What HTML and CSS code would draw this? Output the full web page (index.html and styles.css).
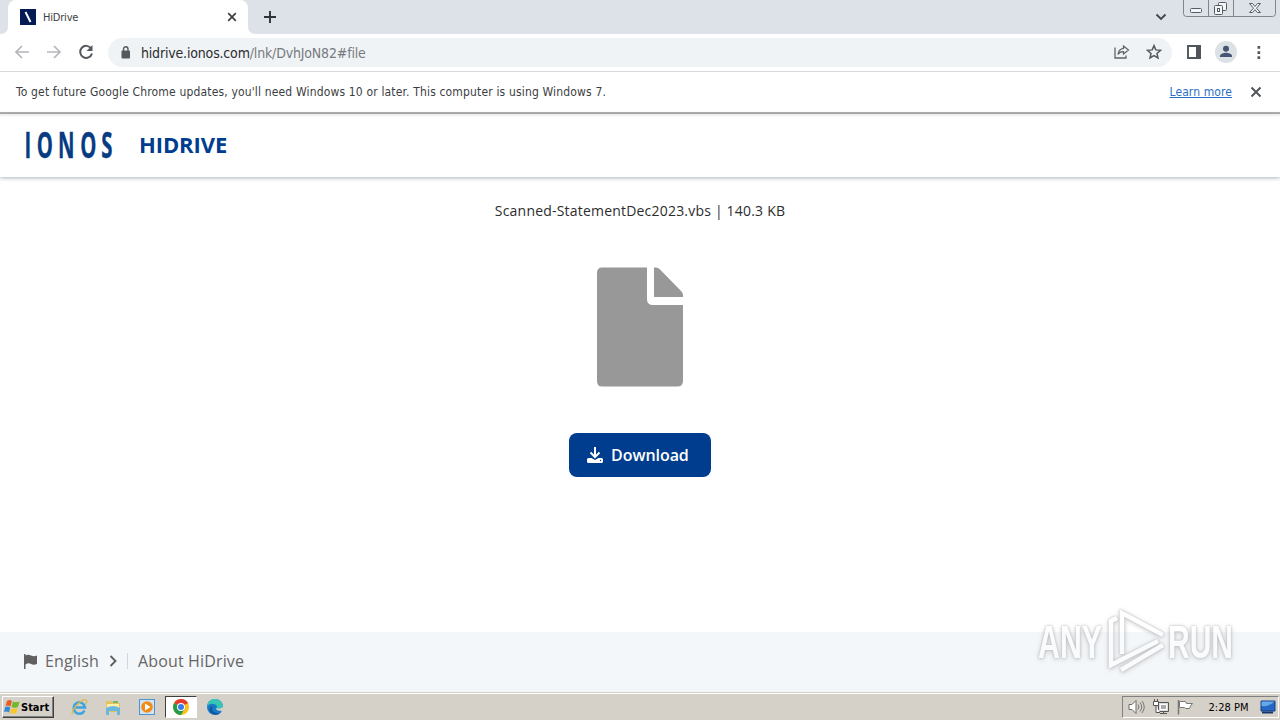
FILE: index.html
```html
<!DOCTYPE html>
<html lang="en">
<head>
    <meta charset="UTF-8">
    <meta name="viewport" content="width=device-width, initial-scale=1.0">
    <title>HiDrive</title>
    <link rel="stylesheet" href="styles.css">
</head>
<body>
    <div class="tabstrip">
        <div class="tab-edge"></div>
        <div class="tab">
            <svg class="favicon" width="16" height="16" viewBox="0 0 16 16"><rect width="16" height="16" fill="#061b55"/><path d="M5.500 3L10.500 13" stroke="#fff" stroke-width="2"/></svg>
            <span class="tab-title">HiDrive</span>
            <svg width="10" height="10" viewBox="0 0 10 10"><path d="M1.200 1.200L8.800 8.800M8.800 1.200L1.200 8.800" stroke="#3c4043" stroke-width="1.700"/></svg>
        </div>
        <div class="tab-rest">
            <svg width="12" height="12" viewBox="0 0 12 12"><path d="M6 0V12M0 6H12" stroke="#303338" stroke-width="1.900"/></svg>
            <svg class="tab-search" width="12" height="8" viewBox="0 0 12 8"><path d="M1.500 1.500L6 6L10.500 1.500" fill="none" stroke="#44474b" stroke-width="1.900"/></svg>
            <svg class="window-buttons" width="94" height="18" viewBox="0 0 94 18">
                <path d="M.5 0V13.500Q.5 16.500 3.500 16.500H89.500Q92.500 16.500 92.500 13.500V0M25.500 0V16M50.500 0V16" fill="none" stroke="#7f858d"/>
                <g fill="#f4f5f7" stroke="#565b63"><rect x="7.500" y="8.500" width="11" height="4" rx="1"/><rect x="35.500" y="2.500" width="8" height="8" rx="1"/><rect x="31.500" y="5.500" width="8" height="9" rx="1"/><rect x="34.500" y="8.500" width="2" height="3"/><path d="M66.500 3.500h3l2.500 3 2.500-3h3l-4 4.700 4 4.300h-3l-2.500-2.800-2.500 2.800h-3l4-4.300z"/></g>
            </svg>
        </div>
    </div>
    <div class="toolbar">
        <div class="nav">
            <svg width="16" height="16" viewBox="0 0 16 16"><path d="M15 8H2M8 2L2 8L8 14" fill="none" stroke="#b5b7ba" stroke-width="1.700"/></svg>
            <svg width="16" height="16" viewBox="0 0 16 16"><path d="M1 8H14M8 2L14 8L8 14" fill="none" stroke="#b5b7ba" stroke-width="1.700"/></svg>
            <svg width="16" height="16" viewBox="0 0 16 16"><path d="M13.200 4.500A6 6 0 1 0 14 9.500" fill="none" stroke="#55585d" stroke-width="2"/><path d="M14.500 1V7H8.500z" fill="#55585d"/></svg>
        </div>
        <div class="omnibox">
            <svg width="10" height="13" viewBox="0 0 10 13"><rect x=".5" y="4.500" width="8.500" height="8" rx="1" fill="#55585d"/><path d="M2.500 5V3.300A2.250 2.500 0 0 1 7 3.300V5" fill="none" stroke="#55585d" stroke-width="1.400"/></svg>
            <span class="url">hidrive.ionos.com<span class="path">/lnk/DvhJoN82#file</span></span>
            <svg class="share" width="16" height="16" viewBox="0 0 16 16"><path d="M1 3.500V14H12V11.500" fill="none" stroke="#5f6368" stroke-width="1.300"/><path d="M9.500 2L14.500 6L9.500 10V7.700Q5.800 7.500 4 10.500Q4.600 5 9.500 4.400Z" fill="none" stroke="#5f6368" stroke-width="1.200"/></svg>
            <svg width="16" height="16" viewBox="0 0 16 16"><path d="M8 1.600L9.800 5.900L14.500 6.300L11 9.400L12 14L8 11.600L4 14L5 9.400L1.500 6.300L6.200 5.900Z" fill="none" stroke="#55585d" stroke-width="1.500"/></svg>
        </div>
        <svg width="14" height="14" viewBox="0 0 14 14"><path d="M1 1H13V13H1Z" fill="none" stroke="#515459" stroke-width="1.900"/><path d="M9 1H14V13H9z" fill="#515459"/></svg>
        <svg class="avatar" width="22" height="22" viewBox="0 0 22 22"><circle cx="11" cy="11" r="11" fill="#dce1e6"/><circle cx="11" cy="7.700" r="3" fill="#465474"/><path d="M5 16V15C5 12.700 9 11.700 11 11.700S17 12.700 17 15V16Z" fill="#465474"/></svg>
        <svg width="4" height="13" viewBox="0 0 4 13"><path d="M.5 0h2.700v2.700h-2.700zM.5 5.200h2.700v2.700h-2.700zM.5 10.300h2.700v2.700h-2.700z" fill="#55585d"/></svg>
    </div>
    <div class="infobar">
        <span class="notice">To get future Google Chrome updates, you'll need Windows 10 or later. This computer is using Windows 7.</span>
        <a class="learn">Learn more</a>
        <svg width="12" height="12" viewBox="0 0 12 12"><path d="M1.500 1.500L10.500 10.500M10.500 1.500L1.500 10.500" stroke="#505357" stroke-width="1.900"/></svg>
    </div>

    <header class="header">
        <svg class="logo" width="100" height="56" viewBox="0 0 100 56">
            <text class="logo-text" transform="translate(0 39.500) scale(.58 1)" x="2.500 23.500 60.500 98.500 135" y="0">IONOS</text>
        </svg>
        <span class="product">HIDRIVE</span>
    </header>

    <main class="content">
        <div class="file-name">Scanned-StatementDec2023.vbs | 140.3 KB</div>
        <svg class="file-icon" width="86" height="120" viewBox="0 0 86 120" fill="#989898"><path d="M5 .5H50V32Q50 38 56 38H86V114Q86 119.500 80 119.500H5Q0 119.500 0 114V6Q0 .5 5 .5Z"/><path d="M57 .5H59Q61 .5 63 2.500L84 24Q86 26 86 28V30H57Z"/></svg>
        <button class="download">
            <svg width="16" height="16" viewBox="0 0 16 16"><path d="M8 0V9M3.500 5.500L8 10L12.500 5.500" fill="none" stroke="#fff" stroke-width="2"/><path d="M1.500 11H4.500L8 13L11.500 11H14.500Q16 11 16 12.500V14.500Q16 16 14.500 16H1.500Q0 16 0 14.500V12.500Q0 11 1.500 11Z" fill="#fff"/><circle cx="13.500" cy="13.500" r=".7" fill="#003d8f"/></svg>
            <span>Download</span>
        </button>
    </main>

    <footer class="footer">
        <svg width="13" height="15" viewBox="0 0 13 15"><path d="M0 0H1.500V1.500Q4 0 7 1.500T13 1.500V10Q9.500 11.500 7 10T1.500 10.500V15H0Z" fill="#606060"/></svg>
        <span class="language">English</span>
        <svg class="chevron" width="8" height="12" viewBox="0 0 8 12"><path d="M1.500 1L6.500 6L1.500 11" fill="none" stroke="#606060" stroke-width="1.900"/></svg>
        <span class="about">About HiDrive</span>
    </footer>

    <div class="taskbar">
        <div class="start">
            <svg width="17" height="16" viewBox="0 0 17 16"><path d="M3 2Q5.500 0 8 2L6.500 7.500Q4 6 1.500 7Z" fill="#e75e24"/><path d="M9 2.500Q12 4 15.500 2.500L14 8Q11 9.500 7.500 8Z" fill="#72b72c"/><path d="M1.200 8Q4 7 6.300 8.500L5 13.500Q2.500 12 0 13Z" fill="#3488d4"/><path d="M7.300 9Q10.500 10.500 13.700 9L12.500 14Q9 15.500 6 14Z" fill="#f7c72c"/></svg>
            <span>Start</span>
        </div>
        <div class="apps">
            <div class="app"><svg width="18" height="18" viewBox="0 0 18 18"><path d="M14.500 12.500A5.700 5.700 0 1 1 15 9.500H5" fill="none" stroke="#3ba5e2" stroke-width="2.500"/><path d="M3 16C-1 14 12 0 16 2C17.500 3 16.500 5 15.500 6.500" fill="none" stroke="#dfba48" stroke-width="1.300"/></svg></div>
            <div class="app"><svg width="16" height="16" viewBox="0 0 16 16"><path d="M1 2H6L8 4H15V13H1Z" fill="#e5c25c"/><path d="M2 5H14V12H2Z" fill="#fff1ad"/><path d="M1 9Q8 5 15 9V16H12V12H4V16H1Z" fill="#6bb8df"/><path d="M8 2H13V4H8Z" fill="#72b865"/></svg></div>
            <div class="app"><svg width="16" height="16" viewBox="0 0 16 16"><rect x=".5" y=".5" width="15" height="15" fill="#cfe5f6" stroke="#4f94cd"/><circle cx="8" cy="8" r="5.800" fill="#f28a16"/><path d="M6 4.500L11.500 8L6 11.500Z" fill="#fff"/></svg></div>
            <div class="app active"><svg width="16" height="16" viewBox="0 0 16 16"><circle cx="8" cy="8" r="8" fill="#fbc116"/><path d="M8 8L1.100 4A8 8 0 0 1 15 4Z" fill="#e33b2e"/><path d="M8 8L1.100 4A8 8 0 0 0 8 16L11.500 10Z" fill="#249b4d"/><circle cx="8" cy="8" r="4" fill="#fff"/><circle cx="8" cy="8" r="3" fill="#377de8"/></svg></div>
            <div class="app"><svg width="16" height="16" viewBox="0 0 16 16"><circle cx="8" cy="8" r="8" fill="#167ac6"/><path d="M.3 7C1 2 4 0 8 0C13 0 16 4 16 7C16 10 14 11 11 11C8 11 10 10 10 8C10 5 4 3 .3 7Z" fill="#39c5b5"/><path d="M6 7C3 11 7 15 13 14Q10 17 6 15C1 13 2 7 6 7Z" fill="#14549d"/><path d="M9 9Q9 12 15 12L16 11V8Q13 11 9 9Z" fill="#d5d0c8"/></svg></div>
        </div>
        <div class="tray">
            <svg width="18" height="16" viewBox="0 0 18 16"><path d="M1 5.500H4L8 1.500V14.500L4 10.500H1Z" fill="#fff" stroke="#6b6b6b"/><path d="M10 5.500Q12 8 10 10.500M12 3.500Q15.500 8 12 12.500M14 2Q18.500 8 14 14" fill="none" stroke="#777"/></svg>
            <svg width="17" height="16" viewBox="0 0 17 16"><path d="M5.500 3.500H15.500V12.500H5.500Z" fill="#ddd" stroke="#555"/><path d="M7.500 5.500H13.500V10.500H7.500Z" fill="#aaa" stroke="#fff"/><path d="M.5 2.500H5.500V6.500H.5ZM1.500 0V2M4.500 0V2M3 7V13.500H7M7 14.500H14M10.500 13V15" fill="#fff" stroke="#555"/></svg>
            <svg width="17" height="16" viewBox="0 0 17 16"><path d="M1.500 1V15.500" stroke="#777" stroke-width="1.500"/><path d="M2.500 2.500H8.500L9.500 4.500H15.500Q13 7 12.500 9.500H8.500L7.500 8.500H2.500Z" fill="#fff" stroke="#777"/></svg>
            <span class="clock">2:28 PM</span>
            <svg width="16" height="14" viewBox="0 0 16 14"><path d="M1 1H15V11H1Z" fill="#2468c3" stroke="#153d85"/><path d="M1.500 6Q8 7 14.500 1.500H1.500Z" fill="#65a9e9"/><path d="M2 12.500H13" stroke="#14366e" stroke-width="2"/></svg>
        </div>
    </div>

    <svg class="watermark" width="210" height="76" viewBox="0 0 210 76">
        <g class="mark-text"><text x="8" y="54" textLength="64" lengthAdjust="spacingAndGlyphs">ANY</text><text x="138" y="54" textLength="65" lengthAdjust="spacingAndGlyphs">RUN</text></g>
        <path d="M87 14L81 17V61L128 37M92 50V9L133 31M91 66L133 41" fill="none" stroke="#fff" stroke-width="4.500"/>
    </svg>
</body>
</html>
```
FILE: styles.css
```css
* {
    box-sizing: border-box;
}
body {
    margin: 0;
    width: 1280px;
    height: 720px;
    position: relative;
    display: flex;
    flex-direction: column;
    overflow: hidden;
    background: #fff;
    font-family: 'DejaVu Sans Condensed', 'DejaVu Sans', sans-serif;
    color: #3c3e42;
}
svg {
    display: block;
    flex-shrink: 0;
    overflow: visible;
}
.tabstrip {
    height: 34px;
    flex-shrink: 0;
    display: flex;
    background: #fff;
}
.tab-edge {
    width: 8px;
    background: #dde1e8;
    border-bottom-right-radius: 7px;
}
.tab {
    width: 240px;
    display: flex;
    align-items: center;
    padding: 0 11px 0 12px;
    border-radius: 8px 8px 0 0;
    background: #fff;
    box-shadow: 0 -8px #dde1e8;
    font-size: 11px;
}
.tab-title {
    flex: 1;
    margin-left: 7px;
    letter-spacing: -0.2px;
}
.tab-rest {
    flex: 1;
    display: flex;
    align-items: center;
    padding: 0 3px 0 16px;
    background: #dde1e8;
    border-bottom-left-radius: 7px;
}
.tab-search {
    margin-left: auto;
    margin-right: 16px;
}
.window-buttons {
    align-self: flex-start;
}
.toolbar {
    height: 38px;
    flex-shrink: 0;
    display: flex;
    align-items: center;
    padding: 0 19px 1px 14px;
    border-bottom: 1px solid #d7d9dc;
}
.nav {
    display: flex;
    gap: 16px;
    width: 94px;
}
.omnibox {
    width: 1065px;
    height: 29px;
    display: flex;
    align-items: center;
    padding: 0 10px 0 13px;
    margin-right: 15px;
    border-radius: 15px;
    background: #f0f3f5;
}
.url {
    flex: 1;
    margin-left: 10px;
    padding-top: 1px;
    font-size: 14px;
    letter-spacing: -0.17px;
    color: #2b2c2f;
}
.path {
    color: #777a7f;
}
.share {
    margin-right: 16px;
}
.avatar {
    margin: 0 20px 0 14px;
}
.infobar {
    height: 42px;
    flex-shrink: 0;
    display: flex;
    align-items: center;
    padding: 0 18px 0 16px;
    border-bottom: 2px solid #b1b1b1;
    font-size: 12px;
}
.notice {
    letter-spacing: 0.16px;
}
.learn {
    margin-left: auto;
    margin-right: 18px;
    letter-spacing: 0.1px;
    color: #2b6fc4;
    text-decoration: underline;
}
.header {
    height: 63px;
    flex-shrink: 0;
    display: flex;
    align-items: center;
    padding-left: 23px;
    box-shadow: 0 1px 4px rgba(40, 60, 90, 0.4), inset 0 3px 2px -1px #eee;
}
.logo-text {
    font-family: 'Open Sans', sans-serif;
    font-size: 35px;
    font-weight: 700;
    fill: #073b83;
    stroke: #073b83;
    stroke-width: 0.4px;
    stroke-linejoin: round;
}
.product {
    margin-left: 16px;
    padding-bottom: 4px;
    font: 700 22px 'Open Sans', sans-serif;
    letter-spacing: -0.1px;
    color: #003d8f;
}
.content {
    flex: 1;
    display: flex;
    flex-direction: column;
    align-items: center;
    padding-top: 24px;
}
.file-name {
    font: 14px/20px 'Open Sans', sans-serif;
    letter-spacing: 0.2px;
    color: #2d2d2d;
}
.file-icon {
    margin-top: 46px;
}
.download {
    width: 142px;
    height: 44px;
    display: flex;
    align-items: center;
    gap: 8px;
    margin-top: 46px;
    padding: 0 18px;
    border: none;
    border-radius: 8px;
    background: #003d8f;
    color: #fff;
    font: 600 16px 'Open Sans', sans-serif;
    letter-spacing: -0.05px;
}
.footer {
    height: 60px;
    flex-shrink: 0;
    display: flex;
    align-items: center;
    padding: 0 0 2px 24px;
    background: #f4f7fa;
    font: 16px 'Open Sans', sans-serif;
    letter-spacing: 0.15px;
    color: #666;
}
.language {
    margin-left: 8px;
}
.chevron {
    margin-left: 10px;
}
.about {
    margin-left: 10px;
    padding-left: 10px;
    border-left: 1px solid #d2d5d9;
    line-height: 16px;
}
.taskbar {
    height: 28px;
    flex-shrink: 0;
    display: flex;
    align-items: center;
    padding: 1px 1px 0 2px;
    border-top: 1px solid #d5d1c9;
    background: #d5d0c8;
    box-shadow: inset 0 1px #fff;
}
.start {
    width: 52px;
    height: 22px;
    display: flex;
    align-items: center;
    padding-left: 1px;
    border: 1px solid;
    border-color: #fff #404040 #404040 #fff;
    box-shadow: inset -1px -1px #808080;
    font-size: 11px;
    font-weight: 700;
    color: #000;
}
.apps {
    display: flex;
    gap: 2px;
    margin-left: 9px;
}
.app {
    width: 32px;
    height: 22px;
    display: flex;
    align-items: center;
    justify-content: center;
}
.active {
    background: #fff;
    border: 1px solid;
    border-color: #404040 #fff #fff #404040;
}
.tray {
    width: 157px;
    height: 22px;
    display: flex;
    align-items: center;
    margin-left: auto;
    padding: 0 2px 0 5px;
    border: 1px solid;
    border-color: #808080 #fff #fff #808080;
    gap: 7px;
    font-size: 11px;
    color: #000;
}
.clock {
    margin: 0 auto;
    padding-left: 3px;
    white-space: nowrap;
}
.watermark {
    position: absolute;
    left: 1030px;
    top: 604px;
    opacity: 0.5;
    filter: drop-shadow(0 0 1px #888) drop-shadow(0 1px 2px #999);
}
.mark-text {
    font-family: 'Liberation Sans', sans-serif;
    font-size: 46px;
    font-weight: 700;
    fill: #fff;
}
```
